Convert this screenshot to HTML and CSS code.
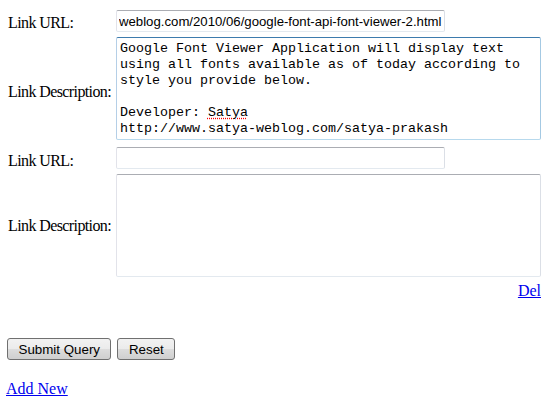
FILE: index.html
```html
<!DOCTYPE html>
<html>
<head>
<meta charset="utf-8">
<link rel="stylesheet" href="styles.css">
</head>
<body>
<form class="form">
  <div class="links">
    <label class="label">Link URL:</label>
    <div class="field"><input class="url first" type="text" value="weblog.com/2010/06/google-font-api-font-viewer-2.html"></div>
    <label class="label">Link Description:</label>
    <div class="field">
      <div class="textarea focused">
        <div class="line">Google Font Viewer Application will display text</div>
        <div class="line">using all fonts available as of today according to</div>
        <div class="line">style you provide below.</div>
        <div class="line"></div>
        <div class="line">Developer: <span class="spell">Satya</span></div>
        <div class="line">http://www.satya-weblog.com/satya-prakash</div>
      </div>
    </div>
    <label class="label">Link URL:</label>
    <div class="field"><input class="url second" type="text" value=""></div>
    <label class="label">Link Description:</label>
    <div class="field"><div class="textarea"></div></div>
  </div>
  <div class="del-row"><a href="#" class="link">Del</a></div>
  <div class="buttons">
    <button type="submit" class="btn">Submit Query</button>
    <button type="reset" class="btn">Reset</button>
  </div>
  <div class="add-row"><a href="#" class="link">Add New</a></div>
</form>
</body>
</html>
```
FILE: styles.css
```css
html, body {
  margin: 0;
  padding: 0;
  background: #ffffff;
}
body {
  padding: 8px 8px 8px 6px;
  font-family: "Liberation Serif", "Times New Roman", serif;
  font-size: 16px;
  color: #000;
}
.form {
  margin: 0;
}
.links {
  display: grid;
  grid-template-columns: 110px 1fr;
  align-items: center;
}
.label {
  padding-left: 2px;
  white-space: nowrap;
  letter-spacing: -0.6px;
}
.field {
  display: flex;
}
.url {
  box-sizing: border-box;
  width: 329px;
  height: 22px;
  padding: 0 1px 0 2px;
  border: 1px solid;
  border-color: #abadb3 #dbdfe6 #e3e9ef #e2e3ea;
  border-radius: 2px;
  font-family: "Liberation Sans", Arial, sans-serif;
  font-size: 13.2px;
  color: #000;
  outline: none;
}
.url.first {
  margin: 2px 0 5px 0;
}
.url.second {
  margin: 0 0 5px 0;
}
.textarea {
  box-sizing: border-box;
  width: 425px;
  height: 103px;
  padding: 3px 3px;
  border: 1px solid;
  border-color: #abadb3 #dbdfe6 #e3e9ef #e2e3ea;
  border-radius: 2px;
  font-family: "Liberation Mono", "Courier New", monospace;
  font-size: 13.33px;
  line-height: 16px;
  overflow: hidden;
  color: #000;
}
.line {
  height: 16px;
  white-space: pre;
}
.textarea.focused {
  border-color: #3d7bad #a4c9e3 #b7d9ed #b5cfe7;
  margin-bottom: 7px;
}
.spell {
  text-decoration: underline dotted #ff0000;
  text-underline-offset: 2px;
}
.del-row {
  display: flex;
  justify-content: flex-end;
  padding-right: 4px;
  margin-top: 5px;
}
.link {
  color: #0000ee;
  text-decoration: underline;
}
.buttons {
  display: flex;
  gap: 6px;
  margin-top: 38px;
  padding-left: 1px;
}
.btn {
  box-sizing: border-box;
  height: 22px;
  padding: 0 10.5px;
  border: 1px solid #707070;
  border-radius: 3px;
  background: linear-gradient(#f2f2f2 0%, #ebebeb 50%, #dddddd 50%, #cfcfcf 100%);
  font-family: "Liberation Sans", Arial, sans-serif;
  font-size: 13.33px;
  color: #000;
}
.add-row {
  margin-top: 20px;
}
```
